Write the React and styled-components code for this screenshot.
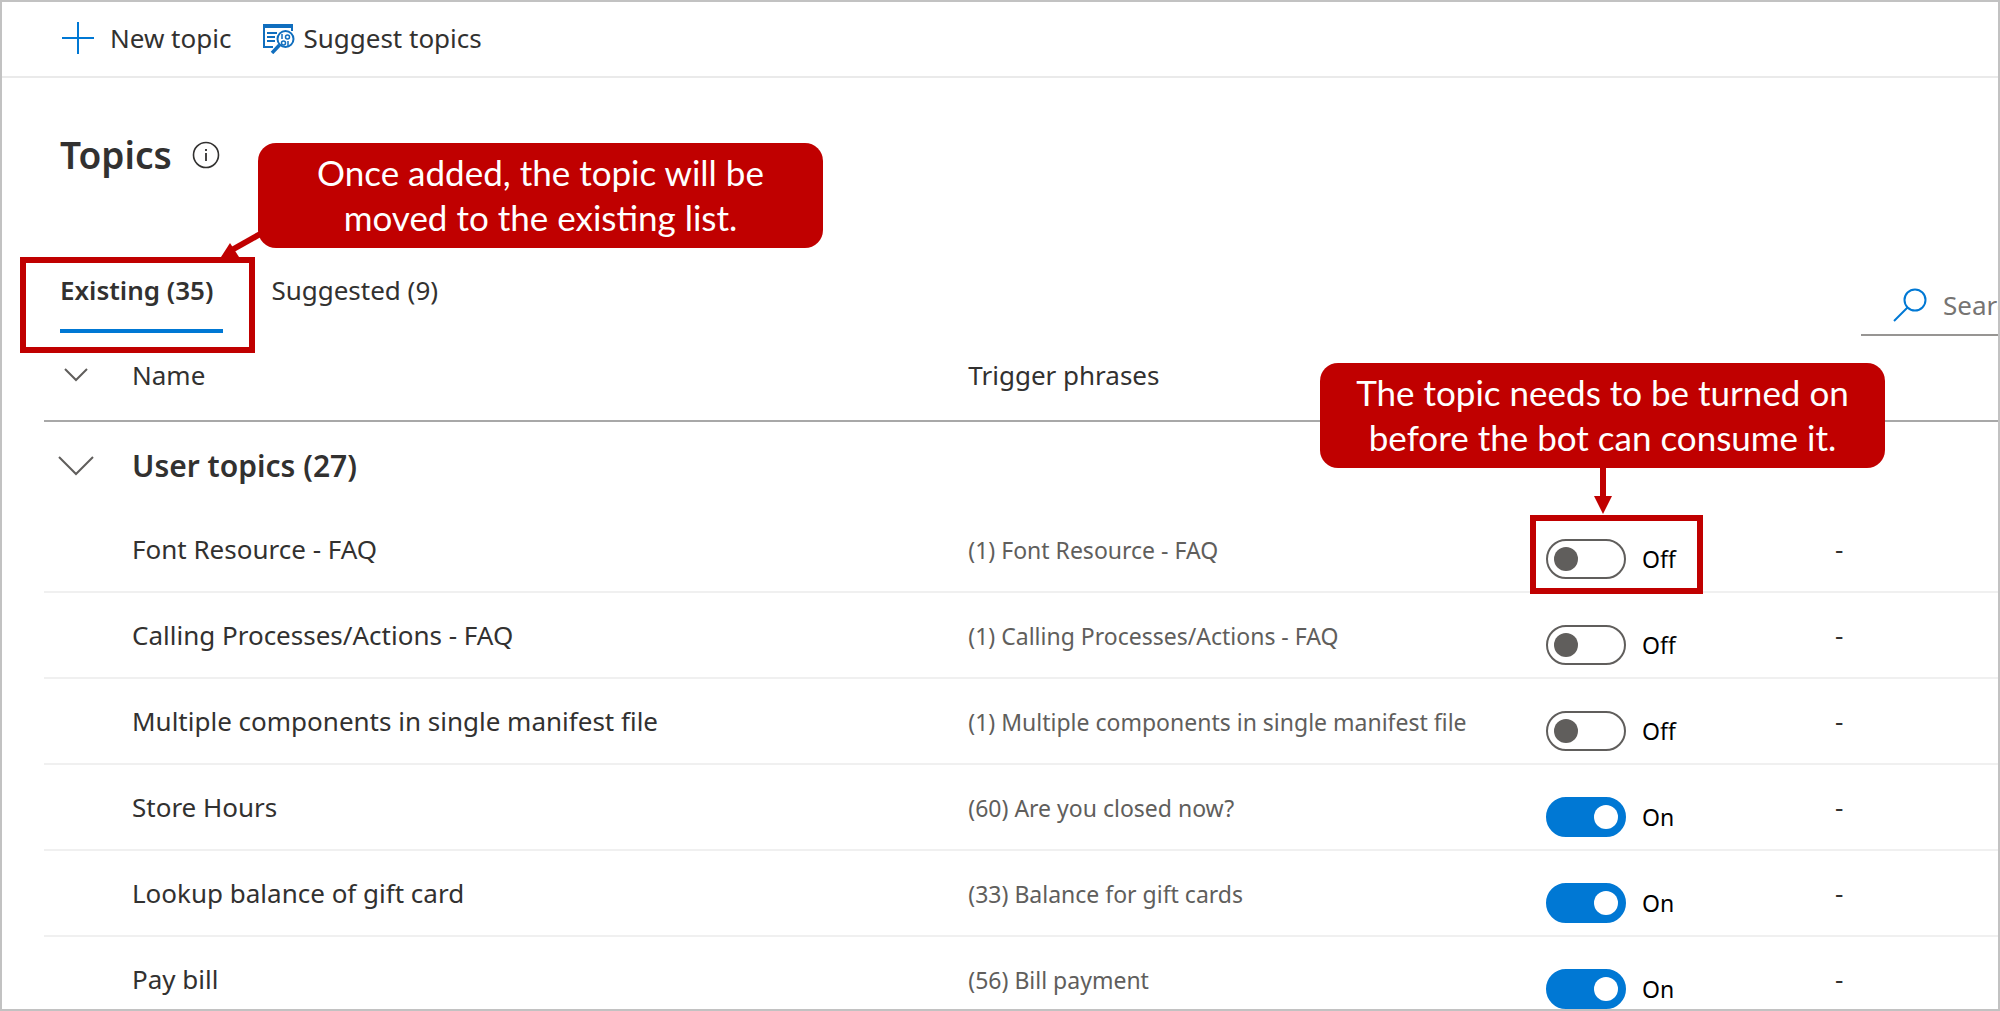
import React, { useState } from "react";
import styled, { createGlobalStyle } from "styled-components";

const red = "#c00000";
const blue = "#0078d4";
const ink = "#323130";

const GlobalStyle = createGlobalStyle`
  *, *::before, *::after { box-sizing: border-box; }
  body { margin: 0; background: #fff; }
  button, input { font: inherit; color: inherit; }
`;

const Frame = styled.div`
  height: 100vh;
  overflow: hidden;
  border: 2px solid #c2c2c2;
  background: #fff;
  color: ${ink};
  font-family: "Noto Sans", "Open Sans", sans-serif;
  font-size: 26px;
  line-height: 36px;
`;

const Toolbar = styled.header`
  display: flex;
  align-items: center;
  gap: 32px;
  height: 76px;
  padding: 0 60px 2px;
  border-bottom: 2px solid #eaeaea;
`;

const Command = styled.button`
  display: flex;
  align-items: center;
  gap: ${(p) => p.$gap}px;
  padding: 0;
  border: 0;
  background: none;
  cursor: pointer;
  white-space: nowrap;
`;

const Icon = styled.svg`
  display: block;
  flex: none;
  fill: none;
  stroke: ${(p) => p.$color || blue};
  stroke-width: 2;
`;

const TitleRow = styled.div`
  display: flex;
  align-items: center;
  gap: 20px;
  padding: 49px 0 0 58px;
`;

const Title = styled.h1`
  margin: 0;
  font-size: 37px;
  font-weight: 600;
  line-height: 56px;
`;

const PivotBar = styled.div`
  display: flex;
  justify-content: space-between;
  align-items: flex-start;
  padding: 85px 0 0 58px;
`;

const Tabs = styled.div`
  display: flex;
  gap: 48px;
`;

const Tab = styled.button`
  position: relative;
  height: 65px;
  padding: 0 10px 18px 0;
  border: 0;
  border-bottom: 4px solid ${(p) => (p.$active ? blue : "transparent")};
  background: none;
  font-weight: ${(p) => (p.$active ? 600 : 400)};
  white-space: nowrap;
  cursor: pointer;
`;

const TabSlot = styled.div`
  position: relative;
`;

const SearchBox = styled.label`
  display: flex;
  align-items: center;
  gap: 16px;
  width: 137px;
  height: 61px;
  margin-top: 7px;
  padding-left: 32px;
  border-bottom: 2px solid #979593;
`;

const SearchInput = styled.input`
  flex: 1;
  min-width: 0;
  padding: 0;
  border: 0;
  outline: 0;
  background: none;
  &::placeholder { color: #767472; opacity: 1; }
`;

const TopicTable = styled.table`
  width: calc(100% - 42px);
  margin-top: -2px;
  margin-left: 42px;
  border-collapse: separate;
  border-spacing: 0;
  table-layout: fixed;
  text-align: left;
`;

const Col = styled.col`
  width: ${(p) => p.$width};
`;

const HeadCell = styled.th`
  height: 88px;
  padding: 0 0 4px;
  border-bottom: 2px solid #a8a8a8;
  font-weight: 400;
`;

const GroupCell = styled.th`
  height: 85px;
  padding: 2px 0 0;
  font-size: 30px;
  font-weight: 600;
`;

const Cell = styled.td`
  height: 86px;
  padding: ${(p) => (p.$muted ? 2 : 0)}px 0 0;
  border-bottom: 2px solid #f0f0f0;
  color: ${(p) => (p.$muted ? "#605e5c" : ink)};
  font-size: ${(p) => (p.$muted ? 23 : 26)}px;
  white-space: nowrap;
`;

const Expander = styled.button`
  display: block;
  padding: 0 0 0 ${(p) => p.$indent}px;
  border: 0;
  background: none;
  cursor: pointer;
`;

const ToggleSlot = styled.div`
  position: relative;
  padding-top: 20px;
`;

const ToggleLabel = styled.label`
  display: flex;
  align-items: center;
  gap: 16px;
  color: #000;
  font-size: 23px;
  line-height: 40px;
  cursor: pointer;
`;

const ToggleInput = styled.input`
  appearance: none;
  position: relative;
  flex: none;
  width: 80px;
  height: 40px;
  margin: 0;
  border: 2px solid #605e5c;
  border-radius: 20px;
  background: #fff;
  cursor: pointer;
  &::before {
    content: "";
    position: absolute;
    top: 6px;
    left: 6px;
    width: 24px;
    height: 24px;
    border-radius: 50%;
    background: #605e5c;
  }
  &:checked { border-color: ${blue}; background: ${blue}; }
  &:checked::before { left: 46px; background: #fff; }
`;

const Highlight = styled.div`
  position: absolute;
  top: ${(p) => p.$top}px;
  left: ${(p) => p.$left}px;
  width: ${(p) => p.$width}px;
  height: ${(p) => p.$height}px;
  border: 6px solid ${red};
  pointer-events: none;
`;

const Callout = styled.div`
  position: absolute;
  z-index: 2;
  top: ${(p) => p.$top}px;
  left: ${(p) => p.$left}px;
  width: 565px;
  height: 105px;
  padding: 7px 0;
  border-radius: 18px;
  background: ${red};
  color: #fff;
  font-family: Lato, "Open Sans", sans-serif;
  font-size: 35px;
  line-height: 45px;
  text-align: center;
  white-space: nowrap;
`;

const Arrow = styled.svg`
  position: absolute;
  z-index: 2;
  top: ${(p) => p.$top}px;
  left: ${(p) => p.$left}px;
  fill: ${red};
  stroke: ${red};
  pointer-events: none;
`;

const topics = [
  { name: "Font Resource - FAQ", phrase: "(1) Font Resource - FAQ", on: false },
  { name: "Calling Processes/Actions - FAQ", phrase: "(1) Calling Processes/Actions - FAQ", on: false },
  { name: "Multiple components in single manifest file", phrase: "(1) Multiple components in single manifest file", on: false },
  { name: "Store Hours", phrase: "(60) Are you closed now?", on: true },
  { name: "Lookup balance of gift card", phrase: "(33) Balance for gift cards", on: true },
  { name: "Pay bill", phrase: "(56) Bill payment", on: true },
];

function PlusIcon() {
  return (
    <Icon width="32" height="32" viewBox="0 0 32 32" aria-hidden="true">
      <path d="M16 0v32M0 16h32" />
    </Icon>
  );
}

function SuggestIcon() {
  return (
    <Icon $color="#106ebe" width="32" height="32" viewBox="0 0 32 32" aria-hidden="true">
      <path d="M0 4h30" strokeWidth="4" />
      <path d="M1 5v20h9M29 5v4" />
      <path d="M4 11h10M4 15h8M4 19h8" />
      <circle cx="22.500" cy="17" r="8" />
      <path d="M16.500 23L9 31" strokeWidth="3.500" />
      <circle cx="24.500" cy="15" r="2" strokeWidth="1.500" />
      <circle cx="20.500" cy="21" r="2" strokeWidth="1.500" />
      <path d="M19 12v5M25 19v5" strokeWidth="1.500" />
    </Icon>
  );
}

function InfoIcon() {
  return (
    <Icon $color={ink} width="28" height="28" viewBox="0 0 28 28" aria-hidden="true">
      <circle cx="14" cy="14" r="12.500" strokeWidth="1.600" />
      <path d="M14 12v8M14 8v2" strokeWidth="1.800" />
    </Icon>
  );
}

function SearchIcon() {
  return (
    <Icon width="34" height="34" viewBox="0 0 34 34" aria-hidden="true">
      <circle cx="22" cy="12" r="10.500" />
      <path d="M14.500 19.500L1 33" />
    </Icon>
  );
}

function Chevron({ size }) {
  return (
    <Icon $color="#605e5c" width={size} height={size / 2 + 2} viewBox={`0 0 ${size} ${size / 2 + 2}`} aria-hidden="true">
      <path d={`M1 1L${size / 2} ${size / 2}L${size - 1} 1`} />
    </Icon>
  );
}

function TopicRow({ topic, children }) {
  const [on, setOn] = useState(topic.on);
  return (
    <tr>
      <Cell />
      <Cell>{topic.name}</Cell>
      <Cell $muted>{topic.phrase}</Cell>
      <Cell>
        <ToggleSlot>
          <ToggleLabel>
            <ToggleInput type="checkbox" role="switch" checked={on} onChange={() => setOn(!on)} />
            {on ? "On" : "Off"}
          </ToggleLabel>
          {children}
        </ToggleSlot>
      </Cell>
      <Cell>-</Cell>
    </tr>
  );
}

export default function App() {
  return (
    <Frame>
      <GlobalStyle />
      <Toolbar>
        <Command type="button" $gap={16}><PlusIcon />New topic</Command>
        <Command type="button" $gap={8}><SuggestIcon />Suggest topics</Command>
      </Toolbar>
      <TitleRow>
        <Title>Topics</Title>
        <InfoIcon />
      </TitleRow>
      <PivotBar>
        <Tabs>
          <TabSlot>
            <Tab type="button" $active>Existing (35)</Tab>
            <Highlight $top={-11} $left={-40} $width={235} $height={96} />
            <Arrow $top={-38} $left={156} width="52" height="32" viewBox="0 0 52 32">
              <path d="M14 21L46 3" strokeWidth="6" />
              <path d="M5 27L14 13L23 27Z" stroke="none" />
            </Arrow>
            <Callout $top={-125} $left={198}>
              Once added, the topic will be<br />moved to the existing list.
            </Callout>
          </TabSlot>
          <Tab type="button">Suggested (9)</Tab>
        </Tabs>
        <SearchBox>
          <SearchIcon />
          <SearchInput type="text" placeholder="Search" aria-label="Search" />
        </SearchBox>
      </PivotBar>
      <TopicTable>
        <colgroup>
          <Col $width="88px" />
          <Col $width="42.8%" />
          <Col />
          <Col $width="289px" />
          <Col $width="163px" />
        </colgroup>
        <thead>
          <tr>
            <HeadCell>
              <Expander type="button" aria-label="Collapse all" $indent={20}><Chevron size={24} /></Expander>
            </HeadCell>
            <HeadCell>Name</HeadCell>
            <HeadCell>Trigger phrases</HeadCell>
            <HeadCell />
            <HeadCell />
          </tr>
        </thead>
        <tbody>
          <tr>
            <GroupCell>
              <Expander type="button" aria-label="Collapse user topics" $indent={14}><Chevron size={36} /></Expander>
            </GroupCell>
            <GroupCell colSpan={4}>User topics (27)</GroupCell>
          </tr>
          {topics.map((topic, i) => (
            <TopicRow key={topic.name} topic={topic}>
              {i === 0 && (
                <>
                  <Callout $top={-156} $left={-226}>
                    The topic needs to be turned on<br />before the bot can consume it.
                  </Callout>
                  <Arrow $top={-52} $left={48} width="18" height="48" viewBox="0 0 18 48">
                    <path d="M9 0V30" strokeWidth="6" />
                    <path d="M0 29H18L9 47Z" stroke="none" />
                  </Arrow>
                  <Highlight $top={-4} $left={-16} $width={173} $height={79} />
                </>
              )}
            </TopicRow>
          ))}
        </tbody>
      </TopicTable>
    </Frame>
  );
}
